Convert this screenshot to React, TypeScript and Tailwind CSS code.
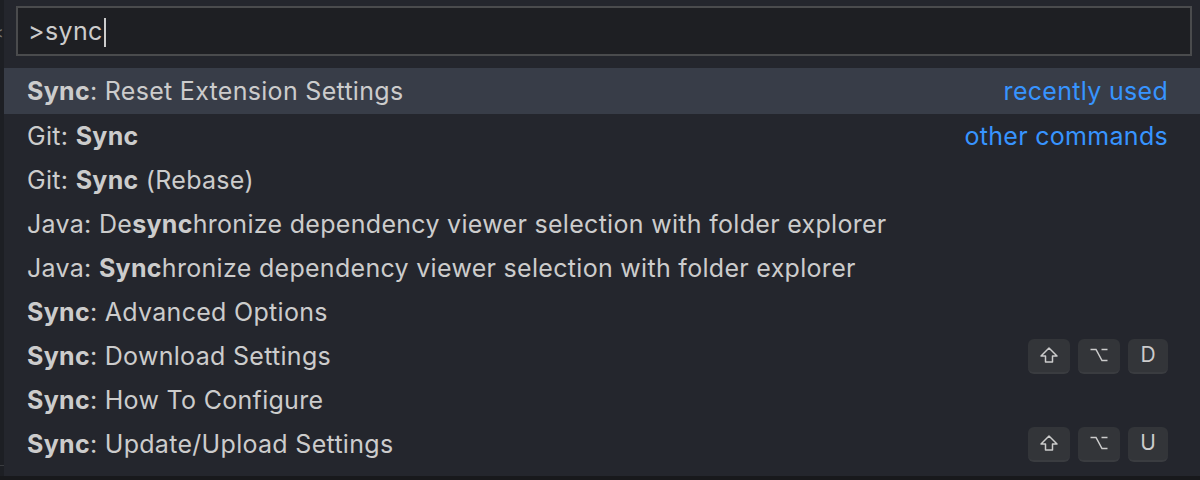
import React from "react";

type Part = { text: string; bold?: boolean };

type Command = {
  parts: Part[];
  label?: string;
  keys?: string[];
  active?: boolean;
};

const COMMANDS: Command[] = [
  {
    parts: [{ text: "Sync", bold: true }, { text: ": Reset Extension Settings" }],
    label: "recently used",
    active: true,
  },
  { parts: [{ text: "Git: " }, { text: "Sync", bold: true }], label: "other commands" },
  { parts: [{ text: "Git: " }, { text: "Sync", bold: true }, { text: " (Rebase)" }] },
  {
    parts: [
      { text: "Java: De" },
      { text: "sync", bold: true },
      { text: "hronize dependency viewer selection with folder explorer" },
    ],
  },
  {
    parts: [
      { text: "Java: " },
      { text: "Sync", bold: true },
      { text: "hronize dependency viewer selection with folder explorer" },
    ],
  },
  { parts: [{ text: "Sync", bold: true }, { text: ": Advanced Options" }] },
  { parts: [{ text: "Sync", bold: true }, { text: ": Download Settings" }], keys: ["shift", "opt", "D"] },
  { parts: [{ text: "Sync", bold: true }, { text: ": How To Configure" }] },
  { parts: [{ text: "Sync", bold: true }, { text: ": Update/Upload Settings" }], keys: ["shift", "opt", "U"] },
];

function KeyCap({ k }: { k: string }) {
  const wide = k === "shift" || k === "opt";
  return (
    <span
      className={`flex h-[35px] items-center justify-center rounded-[6px] border-b-2 border-[#3a3c40] bg-[#333539] text-[21px] tracking-normal text-[#cccccc] ${
        wide ? "w-[42px]" : "w-[40px]"
      }`}
    >
      {k === "shift" ? (
        <svg width="20" height="20" viewBox="0 0 20 20" fill="none">
          <path
            d="M10 3 L18 11 H13.5 V17 H6.5 V11 H2 Z"
            stroke="#cccccc"
            strokeWidth="1.5"
            strokeLinejoin="round"
          />
        </svg>
      ) : k === "opt" ? (
        <svg width="20" height="16" viewBox="0 0 20 16" fill="none">
          <path d="M1.5 2.5 H7 L13 13.5 H18.5 M12.5 2.5 H18.5" stroke="#cccccc" strokeWidth="1.5" />
        </svg>
      ) : (
        k
      )}
    </span>
  );
}

export default function App() {
  return (
    <div
      className="flex h-[480px] w-[1200px] flex-col overflow-hidden bg-[#18191c]"
      style={{ fontFamily: "Inter, 'Noto Sans', sans-serif" }}
    >
      <div className="flex h-[476px] w-full">
        <div className="relative w-[4px] shrink-0 overflow-hidden bg-[#1d1f24]">
          <span className="absolute left-[-7px] top-[20px] text-[16px] text-[#777]">&lt;</span>
          <span className="absolute left-0 top-[465px] h-px w-[4px] bg-[#3a3c40]" />
        </div>
        <div className="flex flex-1 flex-col bg-[#24262d]">
          <div className="px-[12px] pt-[6px] pr-[8px]">
            <div className="flex h-[50px] items-center border-2 border-[#4a4b4d] bg-[#1e1f23] px-[10px] pt-[2px] text-[25px] tracking-[0.015em] text-[#cccccc]">
              <span>&gt;sync</span>
              <span className="ml-px h-[29px] w-[2px] bg-[#cccccc]" />
            </div>
          </div>
          <div className="mt-[12px] flex flex-col">
            {COMMANDS.map((cmd, i) => (
              <div
                key={i}
                className={`flex items-center justify-between pl-[23px] pr-[32px] pt-[2px] text-[25px] tracking-[0.012em] text-[#cccccc] ${
                  cmd.active ? "h-[46px] bg-[#383d48]" : "h-[44px]"
                }`}
              >
                <span className="whitespace-pre">
                  {cmd.parts.map((p, j) =>
                    p.bold ? (
                      <b key={j} className="font-bold">
                        {p.text}
                      </b>
                    ) : (
                      <span key={j}>{p.text}</span>
                    ),
                  )}
                </span>
                {cmd.label ? <span className="text-[#3794ff]">{cmd.label}</span> : null}
                {cmd.keys ? (
                  <span className="-mt-[2px] flex gap-[8px]">
                    {cmd.keys.map((k) => (
                      <KeyCap key={k} k={k} />
                    ))}
                  </span>
                ) : null}
              </div>
            ))}
          </div>
        </div>
      </div>
    </div>
  );
}
